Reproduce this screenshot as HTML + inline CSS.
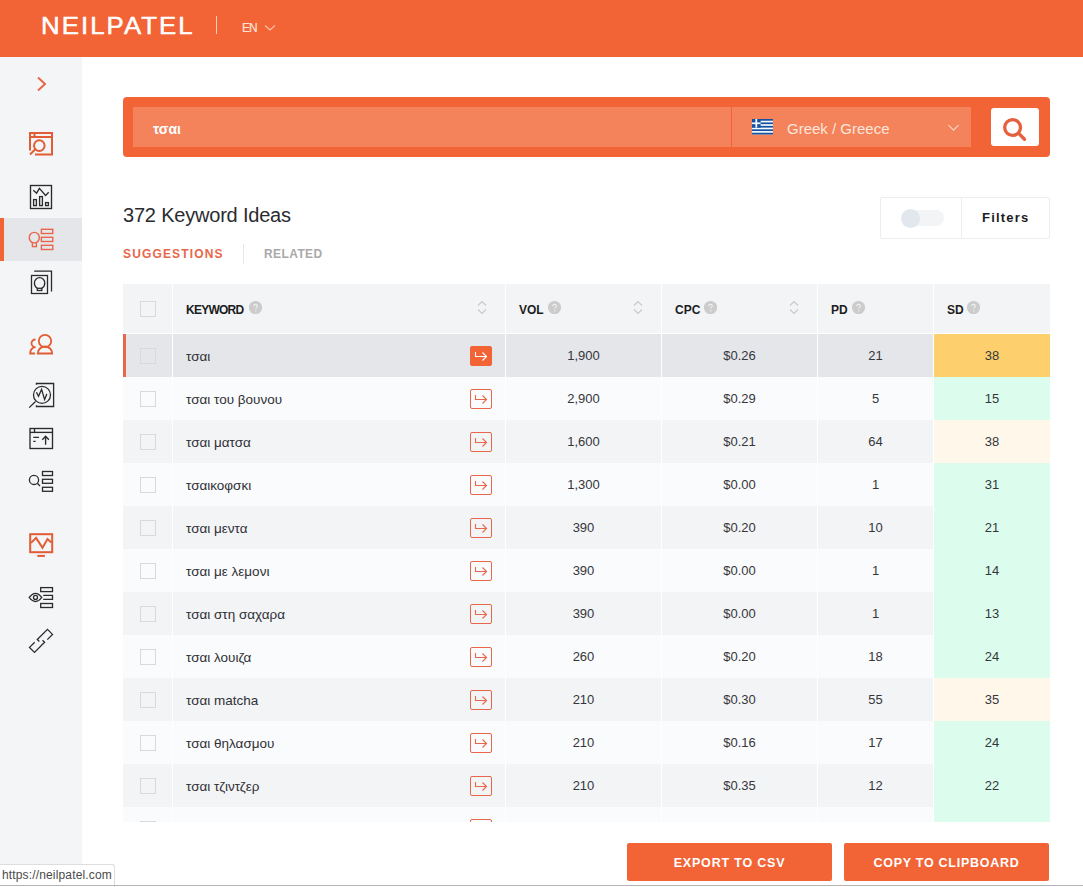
<!DOCTYPE html>
<html><head><meta charset="utf-8">
<style>
*{box-sizing:border-box;margin:0;padding:0}
html,body{width:1083px;height:887px;overflow:hidden;background:#fff;font-family:"Liberation Sans",sans-serif;color:#1f2024}
#hdr{position:absolute;left:0;top:0;width:1083px;height:57px;background:#f26336}
#logo{position:absolute;left:41px;top:13px;color:#fff;font-size:23px;letter-spacing:1.85px;line-height:27px;transform:scaleX(1.12);transform-origin:0 0;-webkit-text-stroke:0.5px #fff}
#sep{position:absolute;left:216px;top:16px;width:1px;height:18px;background:#fbcdb9}
#lang{position:absolute;left:242px;top:22px;color:#fde3d8;font-size:12px;line-height:12px;letter-spacing:-1px;-webkit-text-stroke:0.2px #fde3d8}
#langchev{position:absolute;left:264px;top:24px}
#side{position:absolute;left:0;top:57px;width:82px;height:830px;background:#f4f5f7}
#sideact{position:absolute;left:0;top:218px;width:82px;height:43px;background:#e4e6ea}
#sidebar{position:absolute;left:0;top:218px;width:4px;height:43px;background:#f26336}
.ic{position:absolute;left:0;top:0}
#search{position:absolute;left:123px;top:97px;width:927px;height:60px;background:#f26336;border-radius:4px}
#inp{position:absolute;left:10px;top:10px;width:598px;height:40px;background:#f4825a}
#inptxt{position:absolute;left:20px;top:13px;color:#fff;font-size:14px;font-weight:bold;line-height:18px}
#sel{position:absolute;left:609px;top:10px;width:239px;height:40px;background:#f4825a}
#seltxt{position:absolute;left:55px;top:13px;color:#fde6dc;font-size:15px;line-height:18px}
#flag{position:absolute;left:20px;top:12px}
#selchev{position:absolute;left:215px;top:17px}
#sbtn{position:absolute;left:868px;top:11px;width:48px;height:38px;background:#fff;border-radius:3px}
#sbtn svg{position:absolute;left:12px;top:8px}
#title{position:absolute;left:123px;top:203px;font-size:20px;color:#2a2b30;line-height:24px;letter-spacing:-0.2px}
#tab1{position:absolute;left:123px;top:248px;font-size:12px;font-weight:bold;color:#e8674a;letter-spacing:1.15px;line-height:12px}
#tabsep{position:absolute;left:243px;top:244px;width:1px;height:20px;background:#e6e6e6}
#tab2{position:absolute;left:264px;top:248px;font-size:12px;font-weight:bold;color:#a9a9a9;letter-spacing:0.4px;line-height:12px}
#filt{position:absolute;left:880px;top:197px;width:170px;height:42px;border:1px solid #ebedf0;border-radius:2px;background:#fff}
#filtsep{position:absolute;left:80px;top:0;width:1px;height:40px;background:#ebedf0}
#track{position:absolute;left:22px;top:12px;width:41px;height:16px;border-radius:8px;background:#f2f4f6}
#knob{position:absolute;left:20px;top:11px;width:19px;height:19px;border-radius:50%;background:#e2e7ed}
#filttxt{position:absolute;left:101px;top:13px;font-size:13px;font-weight:bold;letter-spacing:1.2px;color:#1c1d22;line-height:14px}
#tbl{position:absolute;left:123px;top:284px;width:927px;height:538px;overflow:hidden}
#th{position:absolute;left:0;top:0;width:927px;height:50px;background:#f3f4f6;border-bottom:1px solid #fff}
#th div{position:absolute;top:0;height:49px;border-left:1px solid #fff}
.thl{position:absolute;top:19px;font-size:12px;font-weight:bold;color:#1c1d22;line-height:14px}
.thk{letter-spacing:-0.75px;font-size:12px}
.hq{position:absolute;top:16.5px}
.srt{position:absolute;top:16px}
#rows{position:absolute;left:0;top:50px;width:927px}
.r{position:absolute;left:0;width:927px;height:43px}
.r>div{position:absolute;top:0;height:43px;border-left:1px solid #fff;text-align:center;font-size:13px;line-height:44px;color:#35363b}
.lt{background:#fafbfc}
.dk{background:#f3f4f6}
.hl{background:#e4e6ea}
.hl:before{content:"";position:absolute;left:0;top:0;width:3px;height:43px;background:#e8674a;z-index:2}
.c0{left:0;width:49px;border-left:none!important}
.c1{left:49px;width:333px;text-align:left!important}
.c2{left:382px;width:156px}
.c3{left:538px;width:156px}
.c4{left:694px;width:116px}
.c5{left:810px;width:117px}
.sdy{background:#fdcf6d}
.sdg{background:#dcfdee}
.sdc{background:#fef7ea}
.cb{position:absolute;left:17px;top:14px;width:16px;height:16px;border:1px solid #d7d9dc;background:transparent}
.kw{position:absolute;left:13px;top:1px;font-size:13.5px;color:#303136}
.ab{position:absolute;left:297px;top:12px;width:22px;height:20px;border:1px solid #e8674a;border-radius:2px}
.ab svg{position:absolute;left:-1px;top:-1px}
.abf{background:#f26336;border-color:#f26336}
#exp{position:absolute;left:627px;top:843px;width:205px;height:38px;background:#f26336;border-radius:2px;color:#fff;font-weight:bold;font-size:12.5px;letter-spacing:0.8px;text-align:center;line-height:40px}
#copy{position:absolute;left:844px;top:843px;width:205px;height:38px;background:#f26336;border-radius:2px;color:#fff;font-weight:bold;font-size:12.5px;letter-spacing:0.72px;text-align:center;line-height:40px}
#status{position:absolute;left:0;top:864px;width:115px;height:23px;background:#fff;border:1px solid #dedede;border-left:none;border-bottom:none;border-top-right-radius:3px;font-size:12px;color:#4a4a4a;padding-left:2px;line-height:21px;letter-spacing:0.15px}
#botline{position:absolute;left:0;top:885px;width:1083px;height:1px;background:#b4b4b4}
</style></head>
<body>
<div id="hdr">
  <div id="logo">NEILPATEL</div>
  <div id="sep"></div>
  <div id="lang">EN</div>
  <svg id="langchev" width="12" height="8" viewBox="0 0 12 8"><path d="M1 1.5 L6 6 L11 1.5" fill="none" stroke="#fbc2ab" stroke-width="1.2"/></svg>
</div>
<div id="side">
  <div id="sideact" style="top:161px"></div>
  <div id="sidebar" style="top:161px"></div>
</div>
<svg class="ic" width="83" height="887" viewBox="0 0 83 887" style="position:absolute;left:0;top:0">
  <!-- chevron -->
  <path d="M38 77.5 L45 84 L38 90.5" fill="none" stroke="#e8674a" stroke-width="2"/>
  <!-- icon1 -->
  <g fill="none" stroke="#e25c34" stroke-width="2">
    <path d="M30 150.5 V133 H52 V154.5 H35"/>
    <path d="M30 137 H52"/>
    <path d="M34.5 133 V137"/>
    <circle cx="39.3" cy="145.6" r="5.3"/>
    <path d="M35.5 149 L30 154.5"/>
  </g>
  <!-- icon2 -->
  <g fill="none" stroke="#2b2b2b" stroke-width="1.35">
    <rect x="30.5" y="185.5" width="21" height="23"/>
    <path d="M33.3 190.2 L36.6 193.2 L39.4 188.3 L45.6 195.4 L48.7 192.3"/>
    <rect x="33.6" y="199.6" width="2.8" height="6"/>
    <rect x="39.6" y="196.6" width="2.8" height="9"/>
    <rect x="45.6" y="202.6" width="2.8" height="3"/>
  </g>
  <!-- icon3 active -->
  <g fill="none" stroke="#e8674a" stroke-width="1.4">
    <path d="M32.8 242.8 C30.3 241.5 29.3 239.5 29.3 237.4 C29.3 234.6 31.6 232.4 34.3 232.4 C37 232.4 39.3 234.6 39.3 237.4 C39.3 239.5 38.3 241.5 35.8 242.8"/>
    <rect x="32.4" y="242.8" width="4" height="3.8"/>
    <rect x="41.4" y="229.3" width="11.4" height="4.2"/>
    <rect x="41.4" y="237.3" width="11.4" height="4.2"/>
    <rect x="41.4" y="245.3" width="11.4" height="4.2"/>
  </g>
  <!-- icon4 -->
  <g fill="none" stroke="#2b2b2b" stroke-width="1.3">
    <rect x="31.5" y="275.5" width="16" height="18"/>
    <path d="M34.2 271.2 H51.5 V291.6"/>
    <path d="M37.3 288.3 C35.2 287 34.4 285 34.4 283 C34.4 280.1 36.7 277.6 39.6 277.6 C42.5 277.6 44.8 280.1 44.8 283 C44.8 285 44 287 41.8 288.3"/>
    <rect x="37.3" y="288.3" width="4.5" height="2.2"/>
  </g>
  <!-- icon5 people -->
  <g fill="none" stroke="#e25c34" stroke-width="1.8">
    <circle cx="45" cy="341" r="6.2"/>
    <path d="M37.8 353.5 C37.8 349.5 41 346.5 45 346.5 C49 346.5 52.2 349.5 52.2 353.5 Z"/>
    <path d="M35.5 339.5 C33 339.5 31.5 341.4 31.5 343.3 C31.5 345.2 33 347.1 35.5 347.1 C32 347.6 30.2 350 30.2 353.5 H35"/>
  </g>
  <!-- icon6 -->
  <g fill="none" stroke="#2b2b2b" stroke-width="1.3">
    <path d="M36.4 384.8 V383.5 H53.6 V406.5 H36.4 V405.2"/>
    <circle cx="42" cy="394.9" r="8.5"/>
    <path d="M36.4 392.2 L38.5 396.3 L41.6 389.4 L44.6 399.6 L46.8 394.1"/>
    <path d="M35.5 401.5 L29.2 407.6"/>
  </g>
  <!-- icon7 -->
  <g fill="none" stroke="#2b2b2b" stroke-width="1.35">
    <rect x="30" y="428.5" width="22.5" height="20"/>
    <path d="M30 432.4 H52.5"/>
    <path d="M34.5 428.5 V432.4"/>
    <path d="M33.3 437.4 H39 M33.3 441.4 H35.6"/>
    <path d="M45.6 436.2 V444.7 M42.3 439.7 L45.6 436.2 L48.9 439.7"/>
  </g>
  <!-- icon8 -->
  <g fill="none" stroke="#2b2b2b" stroke-width="1.3">
    <circle cx="34" cy="479.9" r="4.6"/>
    <path d="M37.3 483.3 L40 486"/>
    <rect x="42.5" y="471.5" width="10" height="4"/>
    <rect x="42.5" y="479.3" width="10" height="4"/>
    <rect x="42.5" y="487.3" width="10" height="4"/>
  </g>
  <!-- icon9 monitor -->
  <g fill="none" stroke="#e25c34" stroke-width="2">
    <rect x="30.2" y="534.2" width="22" height="18"/>
    <path d="M31.1 542.9 L36.1 537.9 L42.5 547.8 L47.5 539.1 L51.3 542.6"/>
    <path d="M37.3 555.9 H44.9"/>
  </g>
  <!-- icon10 eye -->
  <g fill="none" stroke="#2b2b2b" stroke-width="1.3">
    <path d="M29.2 597.4 C31.5 594.5 33.3 593.3 35.5 593.3 C37.7 593.3 39.5 594.5 41.8 597.4 C39.5 600.3 37.7 601.5 35.5 601.5 C33.3 601.5 31.5 600.3 29.2 597.4 Z"/>
    <circle cx="35.5" cy="597.4" r="2"/>
    <rect x="40.7" y="587.6" width="11.8" height="4"/>
    <path d="M43.2 595.3 H52.5 V599.3 H43.2"/>
    <rect x="40.7" y="603.5" width="11.8" height="4"/>
  </g>
  <!-- icon11 link -->
  <g fill="none" stroke="#2b2b2b" stroke-width="1.3">
    <path d="M47.3 639.6 L52.5 634.4 L47.5 629.4 L37.3 639.6 L39.4 641.5"/>
    <path d="M34.7 642.2 L29.5 647.4 L34.5 652.4 L44.6 642.2 L42.5 640.3"/>
  </g>
</svg>
<div id="search">
  <div id="inp"><div id="inptxt">τσαι</div></div>
  <div id="sel">
    <svg id="flag" width="21" height="16" viewBox="0 0 21 16"><rect width="21" height="15.5" fill="#f4fbff"/><g fill="#1450a0"><rect y="0.00" width="21" height="1.72"/><rect y="3.44" width="21" height="1.72"/><rect y="6.88" width="21" height="1.72"/><rect y="10.32" width="21" height="1.72"/><rect y="13.76" width="21" height="1.72"/><rect width="8.6" height="8.6"/></g><g fill="#f4fbff"><rect x="3.4" y="0" width="1.8" height="8.6"/><rect x="0" y="3.44" width="8.6" height="1.72"/></g></svg>
    <div id="seltxt">Greek / Greece</div>
    <svg id="selchev" width="13" height="8" viewBox="0 0 13 8"><path d="M1.5 1.2 L6.5 6.2 L11.5 1.2" fill="none" stroke="#fbd3c2" stroke-width="1.2"/></svg>
  </div>
  <div id="sbtn"><svg width="26" height="26" viewBox="0 0 26 26"><circle cx="9.6" cy="11.5" r="7.9" fill="none" stroke="#e5603f" stroke-width="3.3"/><path d="M16 17.6 L21.5 23.2" stroke="#e5603f" stroke-width="3.4" stroke-linecap="round"/></svg></div>
</div>
<div id="title">372 Keyword Ideas</div>
<div id="tab1">SUGGESTIONS</div>
<div id="tabsep"></div>
<div id="tab2">RELATED</div>
<div id="filt">
  <div id="track"></div><div id="knob"></div>
  <div id="filtsep"></div>
  <div id="filttxt">Filters</div>
</div>
<div id="tbl">
  <div id="th">
    <span class="cb" style="top:17px"></span>
    <div style="left:49px;width:333px"><span class="thl thk" style="left:13px">KEYWORD</span><svg class="hq" style="left:75.5px" width="13" height="13" viewBox="0 0 13 13"><circle cx="6.5" cy="6.5" r="6.6" fill="#cccccc"/><path d="M4.7 5.2 C4.7 4 5.5 3.4 6.5 3.4 C7.5 3.4 8.3 4.1 8.3 5.1 C8.3 6.3 6.8 6.4 6.8 7.7" fill="none" stroke="#eeeeee" stroke-width="1.2"/><circle cx="6.8" cy="9.7" r="0.8" fill="#eeeeee"/></svg><svg class="srt" style="left:304px" width="10" height="15" viewBox="0 0 10 15"><path d="M1 5.5 L5 1.5 L9 5.5 M1 9.5 L5 13.5 L9 9.5" fill="none" stroke="#c9c9c9" stroke-width="1.2"/></svg></div>
    <div style="left:382px;width:156px"><span class="thl" style="left:13px">VOL</span><svg class="hq" style="left:41.5px" width="13" height="13" viewBox="0 0 13 13"><circle cx="6.5" cy="6.5" r="6.6" fill="#cccccc"/><path d="M4.7 5.2 C4.7 4 5.5 3.4 6.5 3.4 C7.5 3.4 8.3 4.1 8.3 5.1 C8.3 6.3 6.8 6.4 6.8 7.7" fill="none" stroke="#eeeeee" stroke-width="1.2"/><circle cx="6.8" cy="9.7" r="0.8" fill="#eeeeee"/></svg><svg class="srt" style="left:127px" width="10" height="15" viewBox="0 0 10 15"><path d="M1 5.5 L5 1.5 L9 5.5 M1 9.5 L5 13.5 L9 9.5" fill="none" stroke="#c9c9c9" stroke-width="1.2"/></svg></div>
    <div style="left:538px;width:156px"><span class="thl" style="left:13px">CPC</span><svg class="hq" style="left:41.5px" width="13" height="13" viewBox="0 0 13 13"><circle cx="6.5" cy="6.5" r="6.6" fill="#cccccc"/><path d="M4.7 5.2 C4.7 4 5.5 3.4 6.5 3.4 C7.5 3.4 8.3 4.1 8.3 5.1 C8.3 6.3 6.8 6.4 6.8 7.7" fill="none" stroke="#eeeeee" stroke-width="1.2"/><circle cx="6.8" cy="9.7" r="0.8" fill="#eeeeee"/></svg><svg class="srt" style="left:127px" width="10" height="15" viewBox="0 0 10 15"><path d="M1 5.5 L5 1.5 L9 5.5 M1 9.5 L5 13.5 L9 9.5" fill="none" stroke="#c9c9c9" stroke-width="1.2"/></svg></div>
    <div style="left:694px;width:116px"><span class="thl" style="left:13px">PD</span><svg class="hq" style="left:34px" width="13" height="13" viewBox="0 0 13 13"><circle cx="6.5" cy="6.5" r="6.6" fill="#cccccc"/><path d="M4.7 5.2 C4.7 4 5.5 3.4 6.5 3.4 C7.5 3.4 8.3 4.1 8.3 5.1 C8.3 6.3 6.8 6.4 6.8 7.7" fill="none" stroke="#eeeeee" stroke-width="1.2"/><circle cx="6.8" cy="9.7" r="0.8" fill="#eeeeee"/></svg></div>
    <div style="left:810px;width:117px"><span class="thl" style="left:13px">SD</span><svg class="hq" style="left:33px" width="13" height="13" viewBox="0 0 13 13"><circle cx="6.5" cy="6.5" r="6.6" fill="#cccccc"/><path d="M4.7 5.2 C4.7 4 5.5 3.4 6.5 3.4 C7.5 3.4 8.3 4.1 8.3 5.1 C8.3 6.3 6.8 6.4 6.8 7.7" fill="none" stroke="#eeeeee" stroke-width="1.2"/><circle cx="6.8" cy="9.7" r="0.8" fill="#eeeeee"/></svg></div>
  </div>
  <div id="rows">
<div class="r hl" style="top:0px"><div class="c0"><span class="cb"></span></div><div class="c1"><span class="kw">τσαι</span><div class="ab abf"><svg width="22" height="20" viewBox="0 0 22 20"><path d="M5.5 6 V10.5 H16.5 M12.5 6.5 L16.5 10.5 L12.5 14.5" fill="none" stroke="#fff" stroke-width="1.1"/></svg></div></div><div class="c2">1,900</div><div class="c3">$0.26</div><div class="c4">21</div><div class="c5 sdy">38</div></div>
<div class="r lt" style="top:43px"><div class="c0"><span class="cb"></span></div><div class="c1"><span class="kw">τσαι του βουνου</span><div class="ab"><svg width="22" height="20" viewBox="0 0 22 20"><path d="M5.5 6 V10.5 H16.5 M12.5 6.5 L16.5 10.5 L12.5 14.5" fill="none" stroke="#e8674a" stroke-width="1.1"/></svg></div></div><div class="c2">2,900</div><div class="c3">$0.29</div><div class="c4">5</div><div class="c5 sdg">15</div></div>
<div class="r dk" style="top:86px"><div class="c0"><span class="cb"></span></div><div class="c1"><span class="kw">τσαι ματσα</span><div class="ab"><svg width="22" height="20" viewBox="0 0 22 20"><path d="M5.5 6 V10.5 H16.5 M12.5 6.5 L16.5 10.5 L12.5 14.5" fill="none" stroke="#e8674a" stroke-width="1.1"/></svg></div></div><div class="c2">1,600</div><div class="c3">$0.21</div><div class="c4">64</div><div class="c5 sdc">38</div></div>
<div class="r lt" style="top:129px"><div class="c0"><span class="cb"></span></div><div class="c1"><span class="kw">τσαικοφσκι</span><div class="ab"><svg width="22" height="20" viewBox="0 0 22 20"><path d="M5.5 6 V10.5 H16.5 M12.5 6.5 L16.5 10.5 L12.5 14.5" fill="none" stroke="#e8674a" stroke-width="1.1"/></svg></div></div><div class="c2">1,300</div><div class="c3">$0.00</div><div class="c4">1</div><div class="c5 sdg">31</div></div>
<div class="r dk" style="top:172px"><div class="c0"><span class="cb"></span></div><div class="c1"><span class="kw">τσαι μεντα</span><div class="ab"><svg width="22" height="20" viewBox="0 0 22 20"><path d="M5.5 6 V10.5 H16.5 M12.5 6.5 L16.5 10.5 L12.5 14.5" fill="none" stroke="#e8674a" stroke-width="1.1"/></svg></div></div><div class="c2">390</div><div class="c3">$0.20</div><div class="c4">10</div><div class="c5 sdg">21</div></div>
<div class="r lt" style="top:215px"><div class="c0"><span class="cb"></span></div><div class="c1"><span class="kw">τσαι με λεμονι</span><div class="ab"><svg width="22" height="20" viewBox="0 0 22 20"><path d="M5.5 6 V10.5 H16.5 M12.5 6.5 L16.5 10.5 L12.5 14.5" fill="none" stroke="#e8674a" stroke-width="1.1"/></svg></div></div><div class="c2">390</div><div class="c3">$0.00</div><div class="c4">1</div><div class="c5 sdg">14</div></div>
<div class="r dk" style="top:258px"><div class="c0"><span class="cb"></span></div><div class="c1"><span class="kw">τσαι στη σαχαρα</span><div class="ab"><svg width="22" height="20" viewBox="0 0 22 20"><path d="M5.5 6 V10.5 H16.5 M12.5 6.5 L16.5 10.5 L12.5 14.5" fill="none" stroke="#e8674a" stroke-width="1.1"/></svg></div></div><div class="c2">390</div><div class="c3">$0.00</div><div class="c4">1</div><div class="c5 sdg">13</div></div>
<div class="r lt" style="top:301px"><div class="c0"><span class="cb"></span></div><div class="c1"><span class="kw">τσαι λουιζα</span><div class="ab"><svg width="22" height="20" viewBox="0 0 22 20"><path d="M5.5 6 V10.5 H16.5 M12.5 6.5 L16.5 10.5 L12.5 14.5" fill="none" stroke="#e8674a" stroke-width="1.1"/></svg></div></div><div class="c2">260</div><div class="c3">$0.20</div><div class="c4">18</div><div class="c5 sdg">24</div></div>
<div class="r dk" style="top:344px"><div class="c0"><span class="cb"></span></div><div class="c1"><span class="kw">τσαι matcha</span><div class="ab"><svg width="22" height="20" viewBox="0 0 22 20"><path d="M5.5 6 V10.5 H16.5 M12.5 6.5 L16.5 10.5 L12.5 14.5" fill="none" stroke="#e8674a" stroke-width="1.1"/></svg></div></div><div class="c2">210</div><div class="c3">$0.30</div><div class="c4">55</div><div class="c5 sdc">35</div></div>
<div class="r lt" style="top:387px"><div class="c0"><span class="cb"></span></div><div class="c1"><span class="kw">τσαι θηλασμου</span><div class="ab"><svg width="22" height="20" viewBox="0 0 22 20"><path d="M5.5 6 V10.5 H16.5 M12.5 6.5 L16.5 10.5 L12.5 14.5" fill="none" stroke="#e8674a" stroke-width="1.1"/></svg></div></div><div class="c2">210</div><div class="c3">$0.16</div><div class="c4">17</div><div class="c5 sdg">24</div></div>
<div class="r dk" style="top:430px"><div class="c0"><span class="cb"></span></div><div class="c1"><span class="kw">τσαι τζιντζερ</span><div class="ab"><svg width="22" height="20" viewBox="0 0 22 20"><path d="M5.5 6 V10.5 H16.5 M12.5 6.5 L16.5 10.5 L12.5 14.5" fill="none" stroke="#e8674a" stroke-width="1.1"/></svg></div></div><div class="c2">210</div><div class="c3">$0.35</div><div class="c4">12</div><div class="c5 sdg">22</div></div>
<div class="r lt" style="top:473px"><div class="c0"><span class="cb"></span></div><div class="c1"><span class="kw"></span><div class="ab"><svg width="22" height="20" viewBox="0 0 22 20"><path d="M5.5 6 V10.5 H16.5 M12.5 6.5 L16.5 10.5 L12.5 14.5" fill="none" stroke="#e8674a" stroke-width="1.1"/></svg></div></div><div class="c2"></div><div class="c3"></div><div class="c4"></div><div class="c5 sdg"></div></div>
  </div>
</div>
<div id="exp">EXPORT TO CSV</div>
<div id="copy">COPY TO CLIPBOARD</div>
<div id="status">https://neilpatel.com</div>
<div id="botline"></div>
</body></html>
